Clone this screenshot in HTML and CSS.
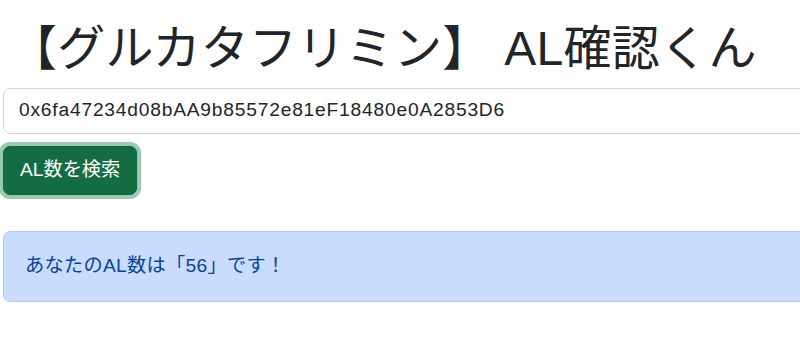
FILE: index.html
```html
<!DOCTYPE html>
<html lang="ja">
<head>
<meta charset="utf-8">
<title>AL確認くん</title>
<link rel="stylesheet" href="styles.css">
</head>
<body>
<main class="page">
  <h1 class="title">【グルカタフリミン】 AL確認くん</h1>
  <form class="search">
    <input class="address" type="text" value="0x6fa47234d08bAA9b85572e81eF18480e0A2853D6">
    <button class="btn-search" type="button">AL数を検索</button>
  </form>
  <div class="alert">あなたのAL数は「56」です！</div>
</main>
</body>
</html>
```

FILE: styles.css
```css
html, body {
  margin: 0;
  padding: 0;
  overflow: hidden;
  background: #fff;
}
body {
  font-family: "Liberation Sans", "Noto Sans CJK JP", sans-serif;
  color: #212529;
  font-size: 19.2px;
  line-height: 1.5;
}
.page {
  width: 830px;
  padding: 20px 0 0 3px;
  box-sizing: border-box;
}
.title {
  margin: 0 0 10px 0;
  padding-left: 6px;
  font-size: 48px;
  font-weight: 400;
  line-height: 1.2;
  letter-spacing: 0.3px;
  color: #212529;
}
.search {
  display: flex;
  flex-direction: column;
  align-items: flex-start;
  gap: 12px;
}
.address {
  display: block;
  width: 100%;
  box-sizing: border-box;
  font: inherit;
  font-size: 19.2px;
  line-height: 28.8px;
  letter-spacing: 0.8px;
  padding: 7.6px 14.4px 7.6px 15px;
  color: #212529;
  border: 1px solid #d4d6da;
  border-radius: 7px;
  background: #fff;
  outline: none;
}
.btn-search {
  font: inherit;
  font-size: 19.2px;
  line-height: 28.8px;
  padding: 9.5px 16px;
  color: #fff;
  background: #146c43;
  border: 1px solid #13653f;
  border-radius: 7px;
  box-shadow: 0 0 0 4px #98c9b2;
  cursor: pointer;
}
.alert {
  margin-top: 36px;
  padding: 19.2px 21px;
  height: 71px;
  box-sizing: border-box;
  display: flex;
  align-items: center;
  color: #084298;
  background: #c9dcfd;
  border: 1px solid #aecbfb;
  border-radius: 7px;
  letter-spacing: 0.3px;
}
```
